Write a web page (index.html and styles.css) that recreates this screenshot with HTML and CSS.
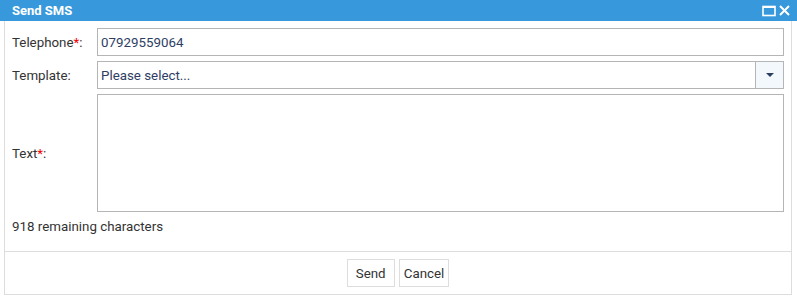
FILE: index.html
```html
<!DOCTYPE html>
<html lang="en">
<head>
  <meta charset="UTF-8">
  <title>Send SMS</title>
  <link rel="stylesheet" href="styles.css">
</head>
<body>

  <div class="window">
    <div class="window-header">
      <span class="window-title">Send SMS</span>
      <span class="window-tools">
        <svg width="14" height="12" viewBox="0 0 14 12"><rect x="1" y="1.5" width="12" height="9" fill="none" stroke="#fff" stroke-width="1.6"/><rect x="1" y="1" width="12" height="2" fill="#fff"/></svg>
        <svg width="13" height="13" viewBox="0 0 13 13"><path d="M2 2 L11 11 M11 2 L2 11" stroke="#fff" stroke-width="2"/></svg>
      </span>
    </div>

    <div class="window-body">
      <div class="form-row">
        <label class="form-label">Telephone<span class="req">*</span>:</label>
        <div class="form-field"><input type="text" class="text-input" value="07929559064"></div>
      </div>
      <div class="form-row">
        <label class="form-label">Template:</label>
        <div class="form-field combo">
          <span class="combo-text">Please select...</span>
          <span class="combo-btn"><span class="caret"></span></span>
        </div>
      </div>
      <div class="form-row text-row">
        <label class="form-label">Text<span class="req">*</span>:</label>
        <div class="form-field"><textarea class="text-area"></textarea></div>
      </div>
      <div class="remaining">918 remaining characters</div>
    </div>

    <div class="window-footer">
      <button class="btn">Send</button>
      <button class="btn">Cancel</button>
    </div>
  </div>

</body>
</html>
```

FILE: styles.css
```css
body {
  margin: 0;
  font-family: Roboto, "Liberation Sans", Arial, sans-serif;
  font-size: 13.33px;
  color: #333;
  background: #fff;
}
.window {
  width: 797px;
}
.window-header {
  height: 21px;
  background: #3799dc;
  color: #fff;
  display: flex;
  align-items: center;
  justify-content: space-between;
  padding: 0 6px 0 12px;
}
.window-title {
  font-weight: bold;
  font-size: 13px;
}
.window-tools {
  display: flex;
  align-items: center;
  gap: 2px;
}
.window-tools svg {
  display: block;
}
.window-body {
  margin: 0 5px 0 4px;
  border-left: 1px solid #ddd;
  border-right: 1px solid #ddd;
  padding: 7px 7px 0 7px;
  height: 223px;
}
.form-row {
  display: flex;
  align-items: center;
  margin-bottom: 5px;
}
.form-label {
  width: 85px;
  flex-shrink: 0;
}
.req {
  color: #e00;
}
.form-field {
  flex: 1;
}
.text-input {
  box-sizing: border-box;
  display: block;
  width: 100%;
  height: 28px;
  border: 1px solid #b5b5b5;
  padding: 0 4px 0 3px;
  font-family: inherit;
  font-size: 13.33px;
  color: #2d3e63;
  outline: none;
}
.combo {
  box-sizing: border-box;
  height: 28px;
  border: 1px solid #b5b5b5;
  display: flex;
  align-items: center;
}
.combo-text {
  flex: 1;
  padding-left: 3px;
  color: #2d3e63;
}
.combo-btn {
  width: 27px;
  height: 100%;
  border-left: 1px solid #b5b5b5;
  background: #f3f8fd;
  display: flex;
  align-items: center;
  justify-content: center;
}
.caret {
  width: 0;
  height: 0;
  border-left: 4px solid transparent;
  border-right: 4px solid transparent;
  border-top: 4px solid #2d3e63;
}
.text-area {
  box-sizing: border-box;
  display: block;
  width: 100%;
  height: 118px;
  border: 1px solid #b5b5b5;
  resize: none;
  outline: none;
}
.remaining {
  margin-top: 7px;
}
.window-footer {
  margin: 0 5px 0 4px;
  border: 1px solid #ddd;
  height: 42px;
  display: flex;
  align-items: center;
  justify-content: center;
  gap: 4px;
}
.btn {
  height: 28px;
  min-width: 48px;
  padding: 0 4px;
  border: 1px solid #ddd;
  background: #fff;
  font-family: inherit;
  font-size: 13.33px;
  color: #333;
}
```
